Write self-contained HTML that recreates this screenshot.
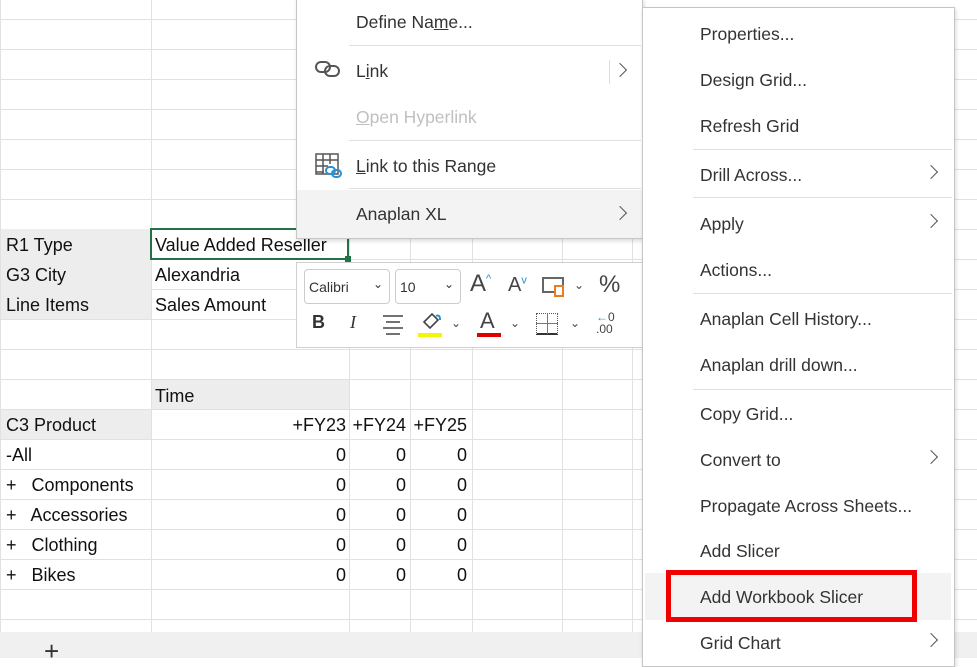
<!DOCTYPE html>
<html><head><meta charset="utf-8"><style>
*{margin:0;padding:0;box-sizing:border-box}
body{width:977px;height:658px;overflow:hidden;background:#fff;font-family:"Liberation Sans",sans-serif;position:relative}
.a{position:absolute}
.vl{position:absolute;top:0;width:1px;height:632px;background:#e1e1e1}
.hl{position:absolute;left:0;width:977px;height:1px;background:#e1e1e1}
.c{position:absolute;font-size:18px;color:#111;line-height:30px;white-space:nowrap}
.r{text-align:right}
.m{position:absolute;font-size:17.5px;color:#333;white-space:nowrap}
.sep{position:absolute;height:1px;background:#e0e0e0}
.chev{position:absolute;width:10px;height:10px;border-right:1.6px solid #555;border-top:1.6px solid #555;transform:rotate(45deg)}
</style></head><body>
<div class="vl" style="left:0"></div>
<div class="vl" style="left:151px"></div>
<div class="vl" style="left:349px"></div>
<div class="vl" style="left:410px"></div>
<div class="vl" style="left:472px"></div>
<div class="vl" style="left:562px"></div>
<div class="vl" style="left:632px"></div>
<div class="hl" style="top:19px"></div><div class="hl" style="top:49px"></div><div class="hl" style="top:79px"></div><div class="hl" style="top:109px"></div><div class="hl" style="top:139px"></div><div class="hl" style="top:169px"></div><div class="hl" style="top:199px"></div><div class="hl" style="top:229px"></div><div class="hl" style="top:259px"></div><div class="hl" style="top:289px"></div><div class="hl" style="top:319px"></div><div class="hl" style="top:349px"></div><div class="hl" style="top:379px"></div><div class="hl" style="top:409px"></div><div class="hl" style="top:439px"></div><div class="hl" style="top:469px"></div><div class="hl" style="top:499px"></div><div class="hl" style="top:529px"></div><div class="hl" style="top:559px"></div><div class="hl" style="top:589px"></div><div class="hl" style="top:619px"></div>
<div class="a" style="left:1px;top:229px;width:150px;height:90px;background:#ededed"></div>
<div class="a" style="left:152px;top:380px;width:197px;height:29px;background:#ededed"></div>
<div class="a" style="left:1px;top:410px;width:150px;height:29px;background:#ededed"></div>
<div class="a" style="left:150px;top:228px;width:199px;height:32px;border:2px solid #217346"></div>
<div class="a" style="left:345px;top:256px;width:6px;height:6px;background:#217346"></div>
<div class="c" style="left:6px;top:230px">R1 Type</div>
<div class="c" style="left:6px;top:260px">G3 City</div>
<div class="c" style="left:6px;top:290px">Line Items</div>
<div class="c" style="left:155px;top:230px">Value Added Reseller</div>
<div class="c" style="left:155px;top:260px">Alexandria</div>
<div class="c" style="left:155px;top:290px">Sales Amount</div>
<div class="c" style="left:155px;top:381px">Time</div>
<div class="c" style="left:6px;top:410px">C3 Product</div>
<div class="c r" style="left:152px;top:410px;width:194px">+FY23</div>
<div class="c r" style="left:350px;top:410px;width:56px">+FY24</div>
<div class="c r" style="left:411px;top:410px;width:56px">+FY25</div>
<div class="c" style="left:6px;top:440px">-All</div>
<div class="c" style="left:6px;top:470px">+&nbsp;&nbsp; Components</div>
<div class="c" style="left:6px;top:500px">+&nbsp;&nbsp; Accessories</div>
<div class="c" style="left:6px;top:530px">+&nbsp;&nbsp; Clothing</div>
<div class="c" style="left:6px;top:560px">+&nbsp;&nbsp; Bikes</div>
<div class="c r" style="left:152px;top:440px;width:194px">0<br>0<br>0<br>0<br>0</div>
<div class="c r" style="left:350px;top:440px;width:56px">0<br>0<br>0<br>0<br>0</div>
<div class="c r" style="left:411px;top:440px;width:56px">0<br>0<br>0<br>0<br>0</div>
<div class="a" style="left:0;top:632px;width:977px;height:26px;background:#f0f0f0"></div>
<div class="a" style="left:44px;top:636px;font-size:26px;color:#333">+</div>
<div class="a" style="left:296px;top:-2px;width:347px;height:241px;background:#fff;border:1px solid #c6c6c6;box-shadow:1px 2px 4px rgba(0,0,0,.15)"></div>
<div class="a" style="left:297px;top:190px;width:345px;height:48px;background:#f3f3f3"></div>
<div class="sep" style="left:349px;top:45px;width:292px"></div>
<div class="sep" style="left:349px;top:140px;width:292px"></div>
<div class="sep" style="left:349px;top:188px;width:292px"></div>
<div class="m" style="left:356px;top:12px">Define Na<u>m</u>e...</div>
<div class="m" style="left:356px;top:61px">L<u>i</u>nk</div>
<div class="m" style="left:356px;top:107px;color:#c0c0c0"><u>O</u>pen Hyperlink</div>
<div class="m" style="left:356px;top:156px"><u>L</u>ink to this Range</div>
<div class="m" style="left:356px;top:204px">Anaplan XL</div>
<div class="a" style="left:609px;top:60px;width:1px;height:24px;background:#ddd"></div>
<div class="chev" style="left:615px;top:65px"></div>
<div class="chev" style="left:615px;top:208px"></div>
<svg class="a" style="left:314px;top:58px" width="30" height="22" viewBox="0 0 30 22"><rect x="2" y="4" width="14" height="10" rx="5" fill="none" stroke="#555" stroke-width="2"/><rect x="11" y="8" width="14" height="10" rx="5" fill="none" stroke="#555" stroke-width="2"/></svg>
<svg class="a" style="left:314px;top:152px" width="30" height="28" viewBox="0 0 30 28"><rect x="2" y="2" width="22" height="20" fill="none" stroke="#555" stroke-width="1.5"/><path d="M2 8H24M2 14H14M2 20H10M9 2V22M16 2V12" stroke="#555" stroke-width="1.5"/><rect x="12" y="15" width="9" height="7" rx="3.5" fill="#fff" stroke="#2b8fd6" stroke-width="2"/><rect x="18" y="18" width="9" height="7" rx="3.5" fill="none" stroke="#2b8fd6" stroke-width="2"/></svg>
<div class="a" style="left:296px;top:262px;width:347px;height:86px;background:#fff;border:1px solid #d0d0d0"></div>
<div class="a" style="left:304px;top:269px;width:86px;height:35px;border:1px solid #ccc;border-radius:4px;font-size:14px;color:#333;padding:9px 0 0 4px">Calibri<span style="position:absolute;right:6px;top:7px;font-size:12px">⌄</span></div>
<div class="a" style="left:395px;top:269px;width:66px;height:35px;border:1px solid #ccc;border-radius:4px;font-size:14px;color:#333;padding:9px 0 0 4px">10<span style="position:absolute;right:6px;top:7px;font-size:12px">⌄</span></div>
<div class="a" style="left:470px;top:270px;font-size:24px;color:#444">A<sup style="font-size:11px;color:#2b8fd6">^</sup></div>
<div class="a" style="left:508px;top:274px;font-size:20px;color:#444">A<sup style="font-size:11px;color:#2b8fd6">v</sup></div>
<div class="a" style="left:542px;top:277px;width:22px;height:16px;border:2px solid #666"></div>
<div class="a" style="left:554px;top:285px;width:10px;height:12px;border:2px solid #e87d1e;background:#fff"></div>
<div class="a" style="left:574px;top:278px;font-size:12px;color:#444">⌄</div>
<div class="a" style="left:599px;top:271px;font-size:24px;color:#444">%</div>
<div class="a" style="left:312px;top:312px;font-size:18px;font-weight:bold;color:#333">B</div>
<div class="a" style="left:350px;top:312px;font-size:18px;font-style:italic;font-family:'Liberation Serif',serif;color:#333">I</div>
<svg class="a" style="left:381px;top:313px" width="24" height="22"><path d="M2 3H22M5 9H19M2 15H22M5 21H19" stroke="#444" stroke-width="1.6"/></svg>
<div class="a" style="left:418px;top:333px;width:24px;height:4px;background:#f5f500"></div>
<svg class="a" style="left:420px;top:310px" width="24" height="22"><path d="M4 12L12 4L18 10L10 18Z" fill="none" stroke="#444" stroke-width="1.6"/><path d="M16 6Q20 4 20 10" fill="none" stroke="#2b8fd6" stroke-width="2"/></svg>
<div class="a" style="left:451px;top:316px;font-size:12px;color:#444">⌄</div>
<div class="a" style="left:480px;top:308px;font-size:22px;color:#444">A</div>
<div class="a" style="left:477px;top:333px;width:24px;height:4px;background:#e00000"></div>
<div class="a" style="left:510px;top:316px;font-size:12px;color:#444">⌄</div>
<div class="a" style="left:536px;top:313px;width:22px;height:22px;border:1px dotted #555;border-bottom:2px solid #333"></div>
<div class="a" style="left:547px;top:313px;width:1px;height:21px;background:#777"></div>
<div class="a" style="left:536px;top:323px;width:22px;height:1px;background:#777"></div>
<div class="a" style="left:570px;top:316px;font-size:12px;color:#444">⌄</div>
<div class="a" style="left:596px;top:311px;font-size:12px;color:#2b8fd6;line-height:12px">←<span style="color:#444">0</span><br><span style="color:#444">.00</span></div>
<div class="a" style="left:642px;top:7px;width:313px;height:660px;background:#fff;border:1px solid #c6c6c6;box-shadow:1px 2px 4px rgba(0,0,0,.15)"></div>
<div class="a" style="left:645px;top:573px;width:306px;height:47px;background:#f3f3f3"></div>
<div class="sep" style="left:693px;top:149px;width:259px"></div>
<div class="sep" style="left:693px;top:197px;width:259px"></div>
<div class="sep" style="left:693px;top:293px;width:259px"></div>
<div class="sep" style="left:693px;top:389px;width:259px"></div>
<div class="m" style="left:700px;top:24px">Properties...</div>
<div class="m" style="left:700px;top:70px">Design Grid...</div>
<div class="m" style="left:700px;top:116px">Refresh Grid</div>
<div class="m" style="left:700px;top:165px">Drill Across...</div>
<div class="m" style="left:700px;top:214px">Apply</div>
<div class="m" style="left:700px;top:260px">Actions...</div>
<div class="m" style="left:700px;top:309px">Anaplan Cell History...</div>
<div class="m" style="left:700px;top:355px">Anaplan drill down...</div>
<div class="m" style="left:700px;top:404px">Copy Grid...</div>
<div class="m" style="left:700px;top:450px">Convert to</div>
<div class="m" style="left:700px;top:496px">Propagate Across Sheets...</div>
<div class="m" style="left:700px;top:541px">Add Slicer</div>
<div class="m" style="left:700px;top:587px">Add Workbook Slicer</div>
<div class="m" style="left:700px;top:633px">Grid Chart</div>
<div class="chev" style="left:926px;top:167px"></div>
<div class="chev" style="left:926px;top:216px"></div>
<div class="chev" style="left:926px;top:452px"></div>
<div class="chev" style="left:926px;top:635px"></div>
<div class="a" style="left:666px;top:570px;width:251px;height:52px;border:5px solid #f00000"></div>
</body></html>
